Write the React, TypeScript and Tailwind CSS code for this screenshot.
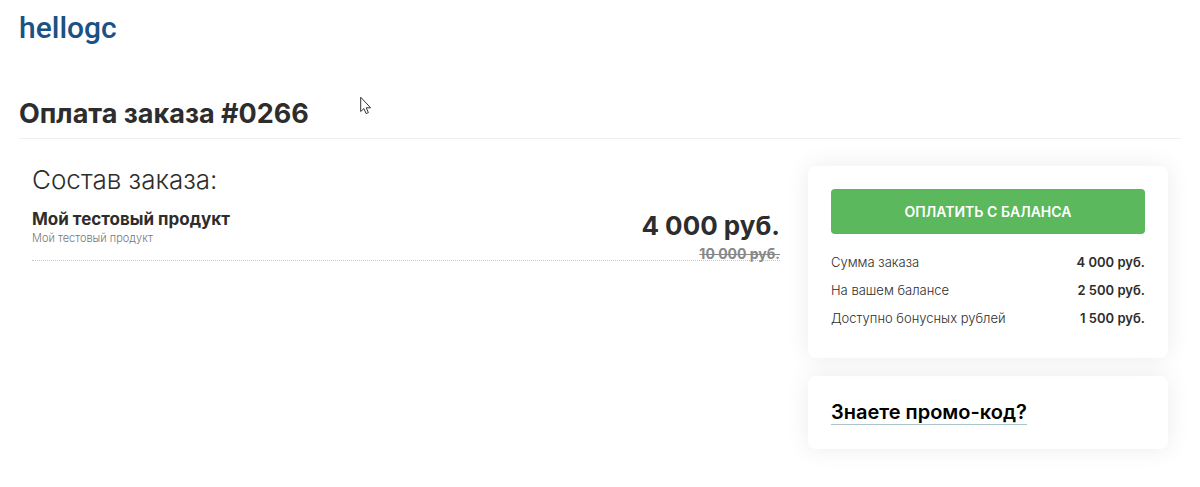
const rows = [
  { label: "Сумма заказа", value: "4 000 руб." },
  { label: "На вашем балансе", value: "2 500 руб." },
  { label: "Доступно бонусных рублей", value: "1 500 руб." },
];

function Pointer() {
  return (
    <svg aria-hidden="true" className="pointer-events-none absolute top-[96px] left-[360px] h-[20px] w-[12px]" viewBox="0 0 12 20">
      <path d="M.7 1.2v14.3l3.2-2.9 2.2 5 2.3-1-2.2-4.8h4.4z" fill="#fff" stroke="#333" strokeWidth="1" strokeLinejoin="round" />
    </svg>
  );
}

export default function App() {
  return (
    <div className="relative min-h-screen bg-white px-[19px] pt-[10px] pb-8 font-['Inter',sans-serif] text-[#2d2d2d]">
      <header className="h-[84px]">
        <a href="#" className="font-['Roboto',sans-serif] text-[30px] leading-9 font-medium text-[#1b5185]">
          hellogc
        </a>
      </header>
      <h1 className="border-b border-[#eeeeee] pb-1 text-[27px] leading-10 font-bold">Оплата заказа #0266</h1>
      <main className="flex justify-between gap-7 px-[13px] pt-[27px]">
        <section className="min-w-0 grow">
          <h2 className="text-[26px] leading-7 font-light">Состав заказа:</h2>
          <div className="mt-[14px] flex justify-between border-b border-dotted border-[#c8c8c8]">
            <div>
              <h3 className="text-[17px] leading-[22px] font-bold">Мой тестовый продукт</h3>
              <p className="text-[11px] leading-4 font-light text-[#777777]">Мой тестовый продукт</p>
            </div>
            <div className="-mb-1 text-right font-bold">
              <p className="text-[26px] leading-9">4 000 руб.</p>
              <p className="text-[14px] leading-5 text-[#888888]">
                <s>10 000 руб.</s>
              </p>
            </div>
          </div>
        </section>
        <aside className="flex w-[360px] shrink-0 flex-col gap-[18px]">
          <div className="rounded-lg px-[23px] pt-[23px] pb-[25px] shadow-[0_0_24px_rgba(0,0,0,0.08)]">
            <button type="button" className="h-[45px] w-full rounded bg-[#5cb85c] text-[14px] font-semibold text-white">
              ОПЛАТИТЬ С БАЛАНСА
            </button>
            <dl className="mt-[15px] text-[13px]">
              {rows.map((row) => (
                <div key={row.label} className="flex h-7 items-center justify-between">
                  <dt className="font-light">{row.label}</dt>
                  <dd className="font-semibold">{row.value}</dd>
                </div>
              ))}
            </dl>
          </div>
          <div className="flex rounded-lg px-[23px] py-6 shadow-[0_0_24px_rgba(0,0,0,0.08)]">
            <a href="#" className="border-b border-[#a9c4cb] text-[20px] leading-6 font-semibold text-black">
              Знаете промо-код?
            </a>
          </div>
        </aside>
      </main>
      <Pointer />
    </div>
  );
}
